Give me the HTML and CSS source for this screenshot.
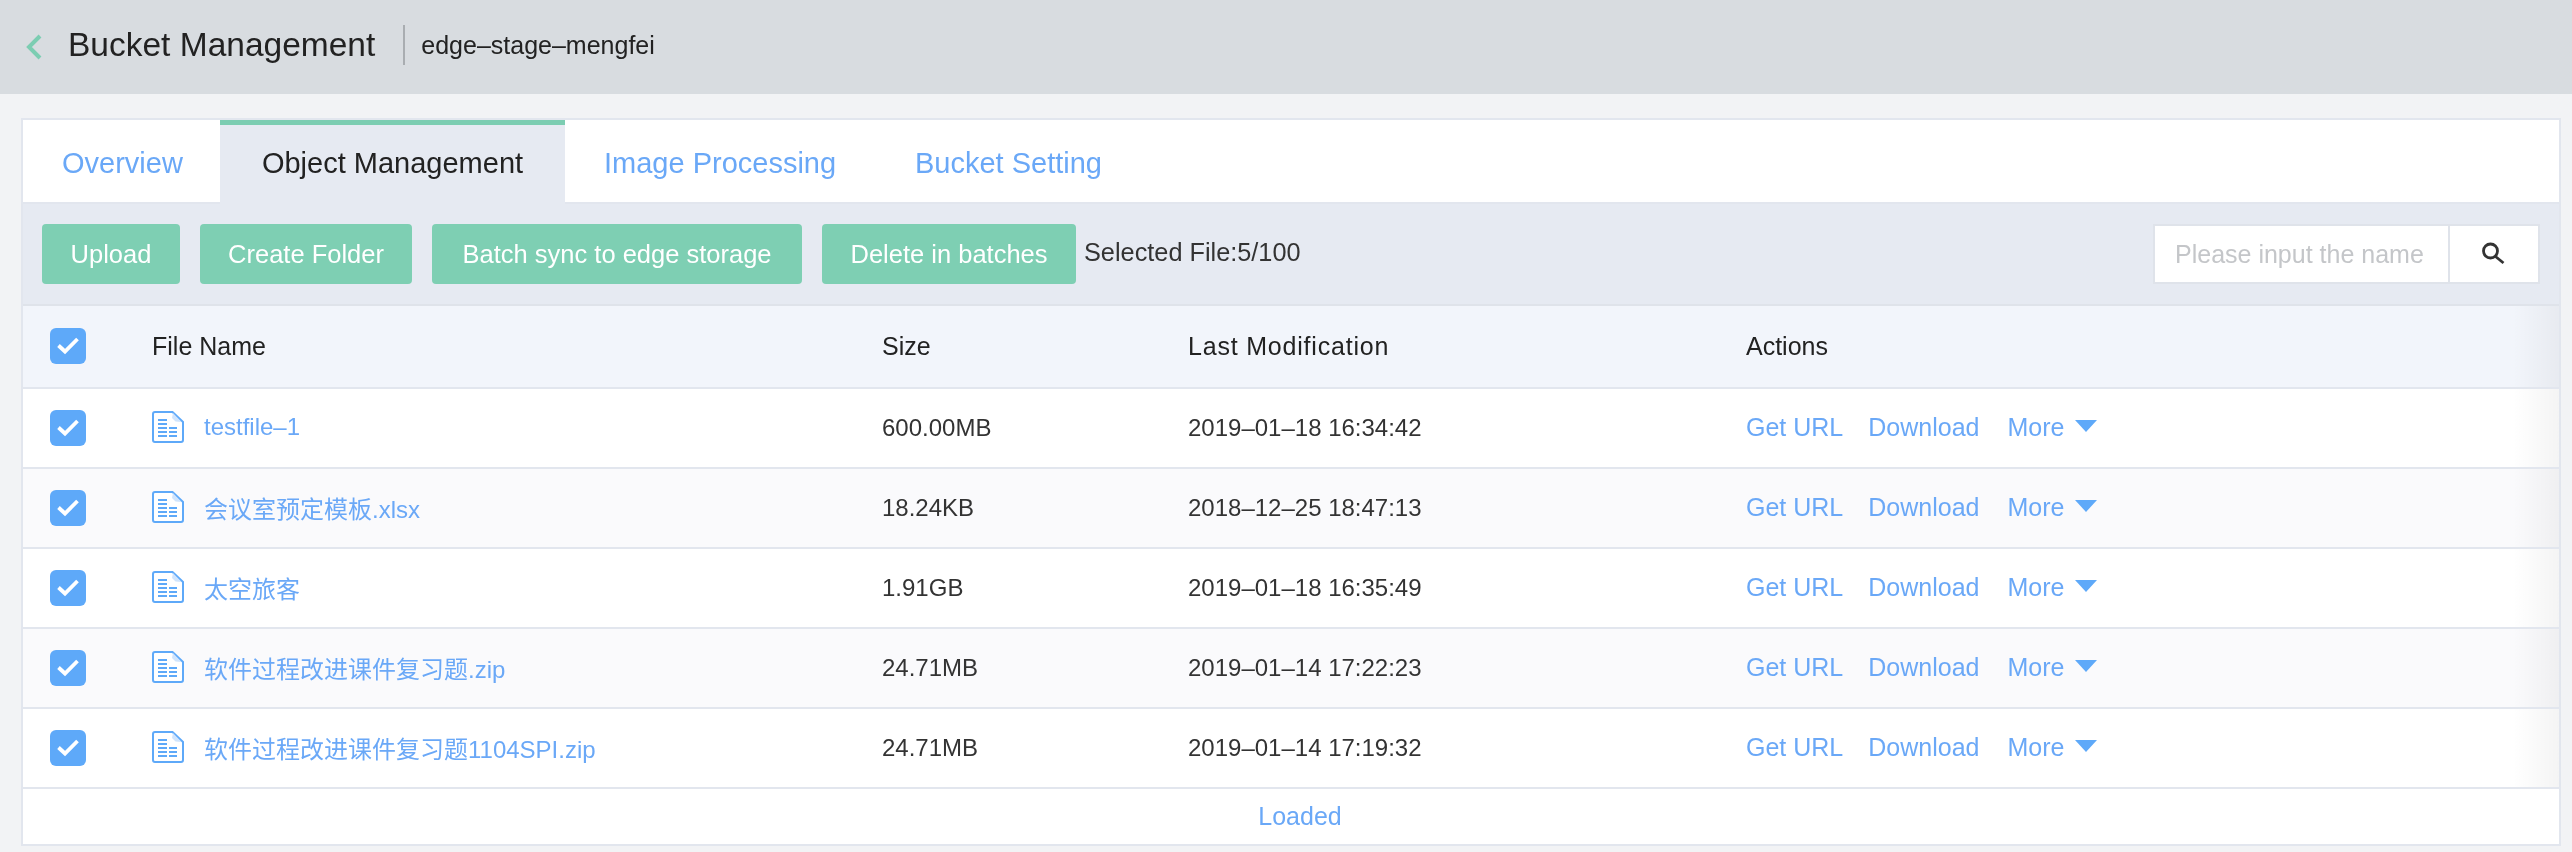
FILE: index.html
```html
<!DOCTYPE html>
<html lang="en">
  <head>
    <meta charset="UTF-8" />
    <title>Bucket Management</title>
    <link rel="stylesheet" href="styles.css">
  </head>
  <body>
    <svg class="sprites" width="0" height="0">
      <symbol id="check" viewBox="0 0 36 36">
        <path d="M8.500 17.500l6.500 6L27.500 11" fill="none" stroke="#fff" stroke-width="3.800" />
      </symbol>
      <symbol id="file" viewBox="0 0 32 32">
        <path d="M3 1h17.500L31 11v18a2 2 0 0 1-2 2H3a2 2 0 0 1-2-2V3a2 2 0 0 1 2-2z" fill="#fff" stroke="#5ea9f9" stroke-width="2" />
        <path d="M21 2l-1 5 3.500 3.500 6 .5z" fill="#cfe4fd" />
        <path d="M6 9h9M6 13h9M6 17h9M17 17h8M6 21h9M17 21h8M6 25h9M17 25h8" fill="none" stroke="#5ea9f9" stroke-width="2" />
      </symbol>
    </svg>

    <header class="topbar">
      <svg class="back" width="18" height="26" viewBox="0 0 18 26">
        <path d="M15 2L4 13l11 11" fill="none" stroke="#7ccdb2" stroke-width="4" />
      </svg>
      <h1 class="title">Bucket Management</h1>
      <span class="bucket-name">edge–stage–mengfei</span>
    </header>

    <main class="card">
      <nav class="tabs">
        <a class="tab tab-overview">Overview</a>
        <a class="tab tab-active">Object Management</a>
        <a class="tab tab-image">Image Processing</a>
        <a class="tab tab-setting">Bucket Setting</a>
      </nav>

      <div class="toolbar">
        <button class="btn btn-upload" type="button">Upload</button>
        <button class="btn btn-folder" type="button">Create Folder</button>
        <button class="btn btn-sync" type="button">Batch sync to edge storage</button>
        <button class="btn btn-delete" type="button">Delete in batches</button>
        <span class="selected">Selected File:5/100</span>
        <div class="search">
          <input class="search-input" type="text" placeholder="Please input the name" />
          <span class="search-btn">
            <svg width="24" height="24" viewBox="0 0 24 24">
              <circle cx="8.500" cy="9" r="7" fill="none" stroke="#333" stroke-width="2.800" />
              <path d="M13.500 14.500l8 6.500" fill="none" stroke="#333" stroke-width="2.800" />
            </svg>
          </span>
        </div>
      </div>

      <div class="row row-head">
        <span class="checkbox"><svg width="36" height="36"><use href="#check" /></svg></span>
        <span>File Name</span>
        <span>Size</span>
        <span class="col-modified">Last Modification</span>
        <span>Actions</span>
      </div>

      <div class="row">
        <span class="checkbox"><svg width="36" height="36"><use href="#check" /></svg></span>
        <a class="file"><svg width="32" height="32"><use href="#file" /></svg>testfile–1</a>
        <span>600.00MB</span>
        <span>2019–01–18 16:34:42</span>
        <span class="actions"><a>Get URL</a><a>Download</a><a class="more">More</a></span>
      </div>

      <div class="row row-even">
        <span class="checkbox"><svg width="36" height="36"><use href="#check" /></svg></span>
        <a class="file"><svg width="32" height="32"><use href="#file" /></svg>会议室预定模板.xlsx</a>
        <span>18.24KB</span>
        <span>2018–12–25 18:47:13</span>
        <span class="actions"><a>Get URL</a><a>Download</a><a class="more">More</a></span>
      </div>

      <div class="row">
        <span class="checkbox"><svg width="36" height="36"><use href="#check" /></svg></span>
        <a class="file"><svg width="32" height="32"><use href="#file" /></svg>太空旅客</a>
        <span>1.91GB</span>
        <span>2019–01–18 16:35:49</span>
        <span class="actions"><a>Get URL</a><a>Download</a><a class="more">More</a></span>
      </div>

      <div class="row row-even">
        <span class="checkbox"><svg width="36" height="36"><use href="#check" /></svg></span>
        <a class="file"><svg width="32" height="32"><use href="#file" /></svg>软件过程改进课件复习题.zip</a>
        <span>24.71MB</span>
        <span>2019–01–14 17:22:23</span>
        <span class="actions"><a>Get URL</a><a>Download</a><a class="more">More</a></span>
      </div>

      <div class="row">
        <span class="checkbox"><svg width="36" height="36"><use href="#check" /></svg></span>
        <a class="file"><svg width="32" height="32"><use href="#file" /></svg>软件过程改进课件复习题1104SPI.zip</a>
        <span>24.71MB</span>
        <span>2019–01–14 17:19:32</span>
        <span class="actions"><a>Get URL</a><a>Download</a><a class="more">More</a></span>
      </div>

      <div class="loaded">Loaded</div>
    </main>
  </body>
</html>
```

FILE: styles.css
```css
body {
  margin: 0;
  background-color: #f2f3f5;
  color: #333;
  font-family: "Liberation Sans", "Noto Sans CJK SC", sans-serif;
  font-size: 24px;
}

.sprites {
  display: block;
  height: 0;
}

/* the screenshot is a soft upscale, so everything gets a slight blur */
.topbar,
.card {
  filter: blur(0.5px);
}

.topbar {
  display: flex;
  align-items: center;
  height: 94px;
  padding: 0 0 4px 25px;
  background-color: #d8dce0;
  box-sizing: border-box;
}

.back {
  margin: 3px 25px 0 0;
}

.title {
  margin: 0;
  padding-right: 28px;
  border-right: 2px solid #a9adb1;
  color: #222;
  font-size: 33.500px;
  font-weight: normal;
  line-height: 40px;
}

.bucket-name {
  margin-left: 16px;
  color: #222;
  font-size: 25px;
}

.card {
  margin: 24px 11px 0 21px;
  border: 2px solid #e2e6ee;
  background-color: #fff;
}

.tabs {
  display: flex;
  height: 84px;
}

.tab {
  display: flex;
  align-items: center;
  box-sizing: border-box;
  padding-left: 39px;
  border-top: 5px solid transparent;
  border-bottom: 2px solid #e2e6ee;
  color: #6aa8f7;
  font-size: 29px;
}

.tab-overview {
  width: 197px;
}

.tab-active {
  justify-content: center;
  width: 345px;
  padding-left: 0;
  border-top-color: #7ccdb2;
  border-bottom-color: #e6eaf2;
  background-color: #e6eaf2;
  color: #222;
}

.tab-image {
  width: 311px;
}

.tab-setting {
  flex: 1;
}

.toolbar {
  display: flex;
  align-items: flex-start;
  height: 102px;
  padding: 20px 19px 0 19px;
  border-bottom: 2px solid #dfe3ea;
  background-color: #e6eaf2;
  box-sizing: border-box;
}

.btn {
  height: 60px;
  margin-right: 20px;
  padding: 0;
  border: none;
  border-radius: 4px;
  background-color: #7ecfb3;
  color: #fff;
  font-family: inherit;
  font-size: 25.500px;
}

.btn-upload { width: 138px; }
.btn-folder { width: 212px; }
.btn-sync { width: 370px; }
.btn-delete { width: 254px; margin-right: 8px; }

.selected {
  color: #333;
  font-size: 25.300px;
  line-height: 56px;
}

.search {
  display: flex;
  height: 60px;
  margin-left: auto;
  border: 2px solid #dfe3ea;
  background-color: #fff;
  box-sizing: border-box;
}

.search-input {
  width: 295px;
  padding: 0 20px;
  border: none;
  border-right: 2px solid #dfe3ea;
  outline: none;
  font-family: inherit;
  font-size: 25px;
  box-sizing: border-box;
}

.search-input::placeholder {
  color: #c4c6c9;
}

.search-btn {
  display: flex;
  align-items: center;
  justify-content: center;
  width: 88px;
}

/* right edge of the table fades out, like a fixed column shadow */
.row {
  display: grid;
  grid-template-columns: 129px 730px 306px 558px 1fr;
  align-items: center;
  height: 80px;
  border-bottom: 2px solid #e2e6ee;
  background-image: linear-gradient(to right, rgba(0, 0, 0, 0), rgba(0, 0, 0, 0.045));
  background-position: right top;
  background-repeat: no-repeat;
  background-size: 46px 100%;
  box-sizing: border-box;
}

.row-head {
  height: 83px;
  background-color: #f2f5fb;
  color: #222;
  font-size: 25px;
}

.col-modified {
  letter-spacing: 0.8px;
}

.row-even {
  background-color: #fafafc;
}

.checkbox {
  display: block;
  width: 36px;
  height: 36px;
  margin: -1px 0 0 27px;
  border-radius: 6px;
  background-color: #5ea9f9;
}

.checkbox svg {
  display: block;
}

.file {
  display: flex;
  align-items: center;
  gap: 20px;
  margin-top: -2px;
  color: #6aa8f7;
}

.actions {
  display: flex;
  gap: 25px;
  margin-top: -2px;
  color: #6aa8f7;
  font-size: 25px;
}

.more {
  display: flex;
  align-items: center;
  gap: 11px;
  margin-left: 3px;
}

.more::after {
  content: "";
  margin-top: -3px;
  border-top: 12px solid #5ea9f9;
  border-left: 11px solid transparent;
  border-right: 11px solid transparent;
}

.loaded {
  height: 55px;
  padding-left: 18px;
  color: #6aa8f7;
  font-size: 25px;
  line-height: 54px;
  text-align: center;
}
```
